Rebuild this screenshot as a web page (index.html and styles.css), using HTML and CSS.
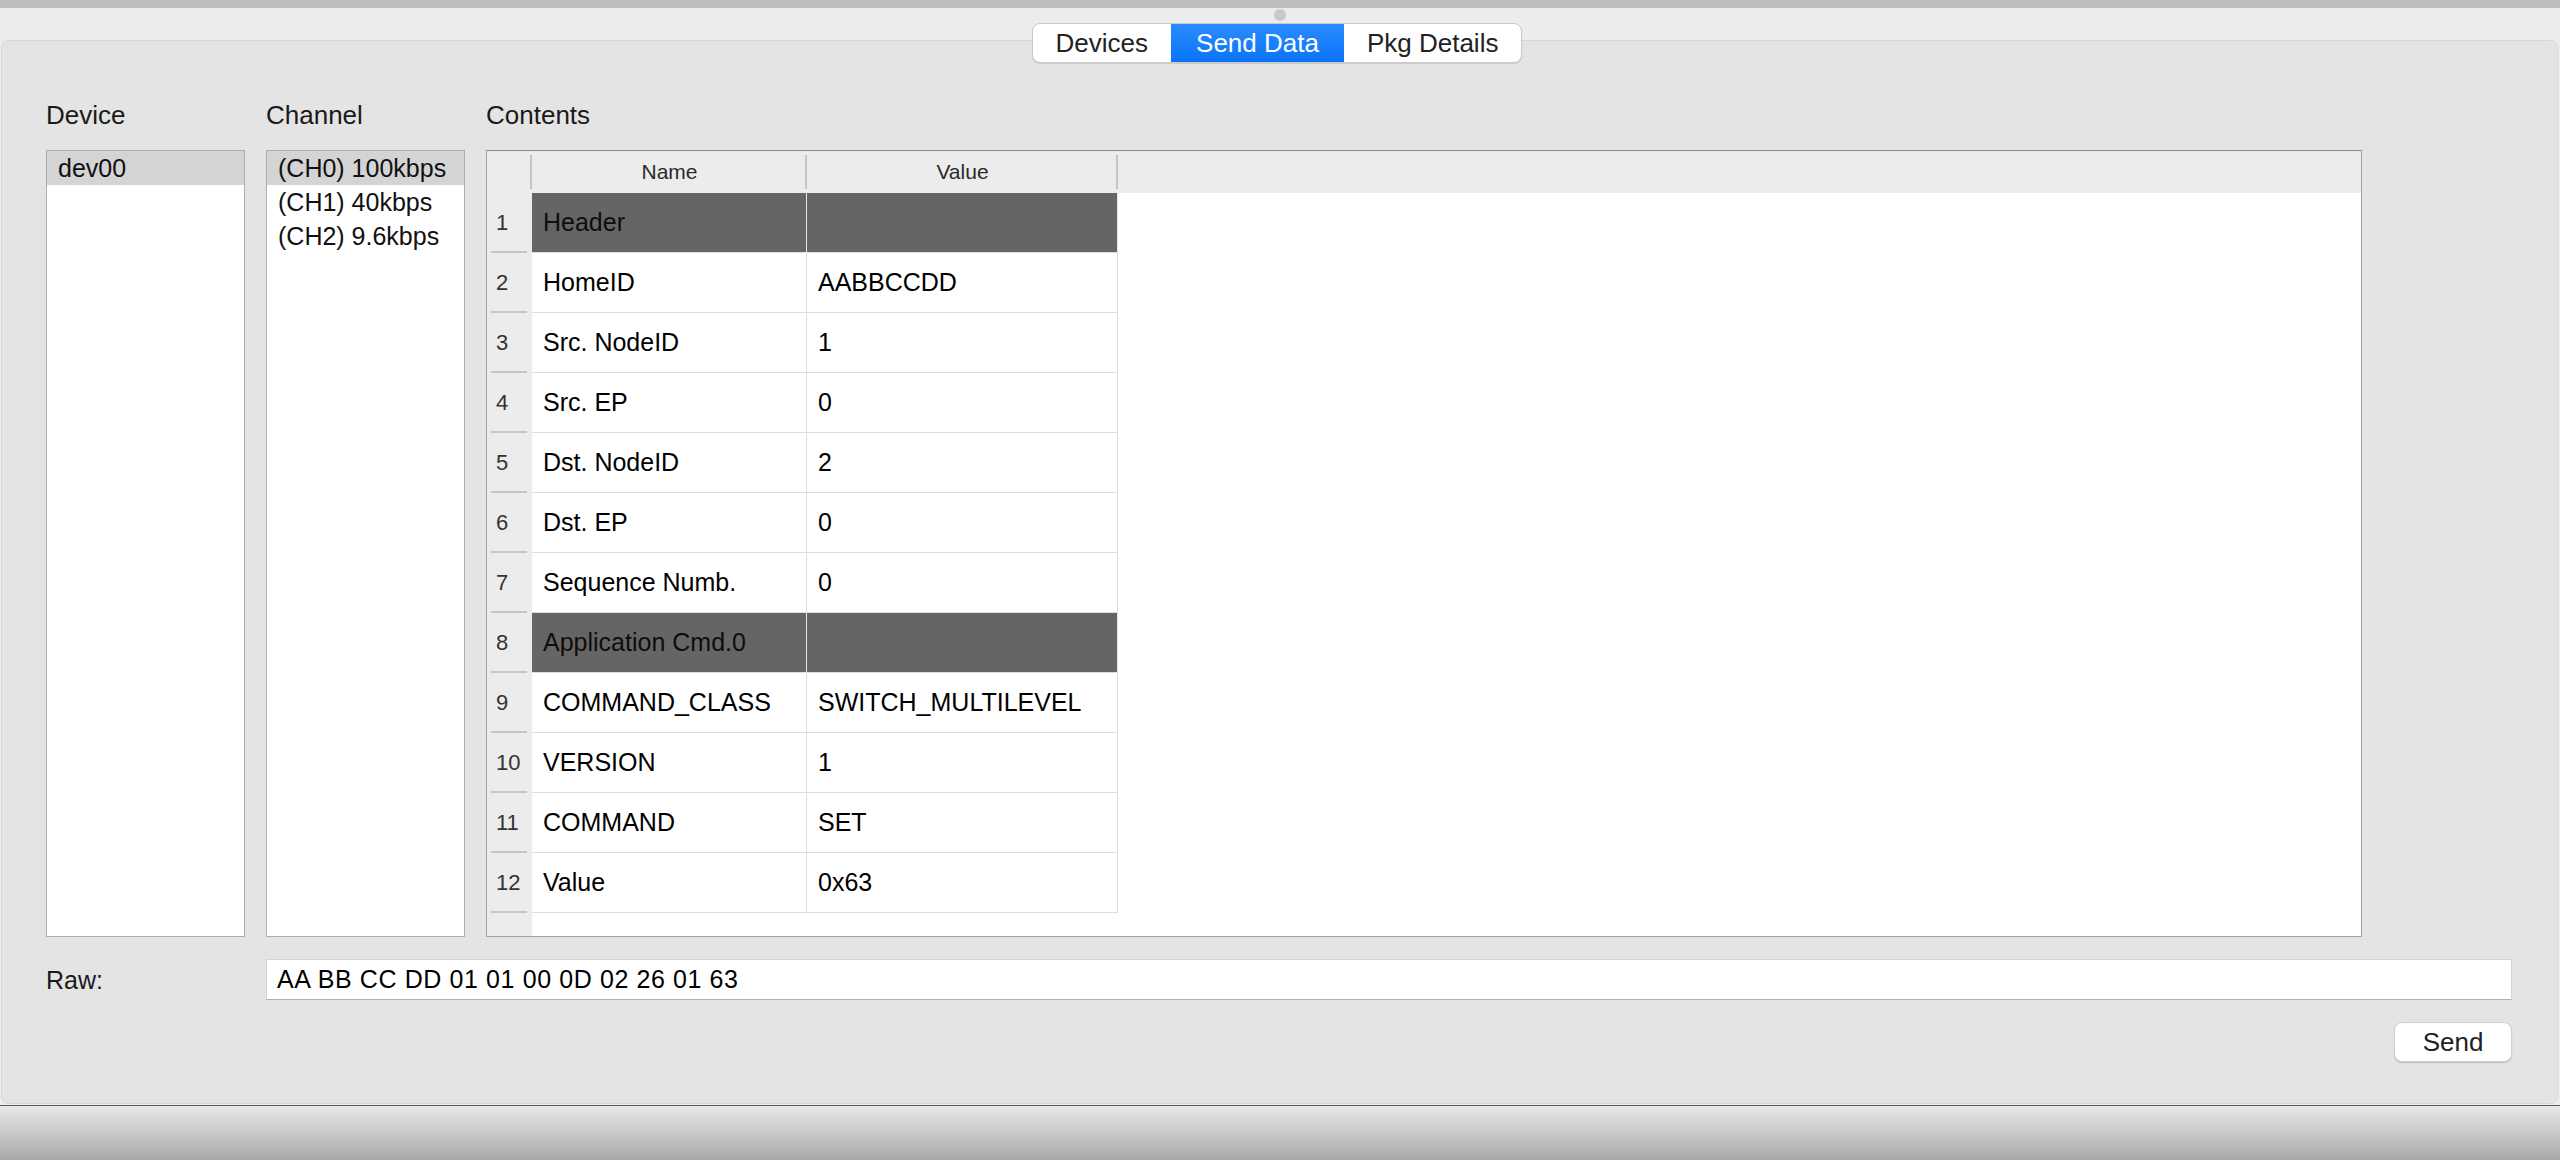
FILE: index.html
```html
<!DOCTYPE html>
<html>
<head>
<meta charset="utf-8">
<title>Send Data</title>
<link rel="stylesheet" href="styles.css">
</head>
<body>
<div class="topstrip"></div>
<div class="dotrow"><span class="dot"></span></div>
<div class="tabsrow">
  <div class="tabs">
    <div class="tab">Devices</div>
    <div class="tab active">Send Data</div>
    <div class="tab">Pkg Details</div>
  </div>
</div>
<div class="panel">
  <div class="cols">
    <div class="label">Device</div>
    <div class="label">Channel</div>
    <div class="label">Contents</div>
    <div class="list">
      <div class="item sel">dev00</div>
    </div>
    <div class="list">
      <div class="item sel">(CH0) 100kbps</div>
      <div class="item">(CH1) 40kbps</div>
      <div class="item">(CH2) 9.6kbps</div>
    </div>
    <div class="tbl">
      <div class="th rnh"></div>
      <div class="th">Name</div>
      <div class="th">Value</div>
      <div class="th fill"></div>

      <div class="rn">1</div><div class="cell dark">Header</div><div class="cell dark"></div><div class="fill"></div>
      <div class="rn">2</div><div class="cell">HomeID</div><div class="cell">AABBCCDD</div><div class="fill"></div>
      <div class="rn">3</div><div class="cell">Src. NodeID</div><div class="cell">1</div><div class="fill"></div>
      <div class="rn">4</div><div class="cell">Src. EP</div><div class="cell">0</div><div class="fill"></div>
      <div class="rn">5</div><div class="cell">Dst. NodeID</div><div class="cell">2</div><div class="fill"></div>
      <div class="rn">6</div><div class="cell">Dst. EP</div><div class="cell">0</div><div class="fill"></div>
      <div class="rn">7</div><div class="cell">Sequence Numb.</div><div class="cell">0</div><div class="fill"></div>
      <div class="rn">8</div><div class="cell dark">Application Cmd.0</div><div class="cell dark"></div><div class="fill"></div>
      <div class="rn">9</div><div class="cell">COMMAND_CLASS</div><div class="cell">SWITCH_MULTILEVEL</div><div class="fill"></div>
      <div class="rn">10</div><div class="cell">VERSION</div><div class="cell">1</div><div class="fill"></div>
      <div class="rn">11</div><div class="cell">COMMAND</div><div class="cell">SET</div><div class="fill"></div>
      <div class="rn">12</div><div class="cell">Value</div><div class="cell">0x63</div><div class="fill"></div>
    </div>
  </div>
  <div class="rawrow">
    <div class="rawlabel">Raw:</div>
    <div class="rawinput">AA BB CC DD 01 01 00 0D 02 26 01 63</div>
  </div>
  <div class="btnrow">
    <div class="btn">Send</div>
  </div>
</div>
<div class="bottombar"></div>
</body>
</html>
```

FILE: styles.css
```css
html, body {
  margin: 0;
  padding: 0;
}
body {
  width: 2560px;
  height: 1160px;
  overflow: hidden;
  background: #ececec;
  font-family: "Liberation Sans", Arial, Helvetica, sans-serif;
  color: #1a1a1a;
}
.topstrip {
  height: 8px;
  background: #bdbdbd;
}
.dotrow {
  height: 15px;
  display: flex;
  justify-content: center;
}
.dot {
  width: 12px;
  height: 12px;
  margin-top: 1px;
  border-radius: 50%;
  background: #c9c9c9;
}
.tabsrow {
  height: 40px;
  display: flex;
  justify-content: center;
  position: relative;
  z-index: 2;
}
.tabs {
  display: flex;
  margin-left: -6px;
  height: 40px;
  box-sizing: border-box;
  border: 1px solid #c9c9c9;
  border-radius: 8px;
  background: #fff;
  box-shadow: 0 1px 1px rgba(0,0,0,0.12);
  overflow: hidden;
}
.tab {
  padding: 0 23px;
  font-size: 26px;
  line-height: 38px;
  color: #222;
}
.tab.active {
  color: #fff;
  background: linear-gradient(#2a8cff, #0a74f7);
  padding: 0 25px;
}
.panel {
  margin: -23px 2px 0 1px;
  box-sizing: border-box;
  border: 1px solid #d7d7d7;
  border-radius: 8px;
  background: #e4e4e4;
  padding: 59px 45px 41px 44px;
  position: relative;
  z-index: 1;
}
.cols {
  display: grid;
  grid-template-columns: 199px 199px 1876px;
  grid-template-rows: 30px 787px;
  column-gap: 21px;
  row-gap: 20px;
}
.label {
  font-size: 26px;
  line-height: 30px;
  color: #1a1a1a;
}
.list {
  background: #fff;
  border: 1px solid #adadad;
  box-sizing: border-box;
}
.item {
  height: 34px;
  line-height: 34px;
  font-size: 25px;
  padding-left: 11px;
  color: #111;
  white-space: nowrap;
}
.item.sel {
  background: #d4d4d4;
}
.tbl {
  box-sizing: border-box;
  border: 1px solid #a2a2a2;
  border-top-color: #8a8a8a;
  background: linear-gradient(to right, #ececec 45px, #fff 45px);
  display: grid;
  grid-template-columns: 45px 275px 311px 1fr;
  grid-template-rows: 42px repeat(12, 60px);
  align-content: start;
}
.th {
  background: #ececec linear-gradient(#c4c4c4, #c4c4c4) no-repeat right 0 top 4px / 2px 34px;
  font-size: 21px;
  line-height: 42px;
  text-align: center;
  color: #2a2a2a;
}
.th.fill {
  background: #ececec;
}
.rn {
  box-sizing: border-box;
  background: #ececec linear-gradient(#c6c6c6, #c6c6c6) no-repeat left 4px bottom 0 / 36px 2px;
  font-size: 22px;
  line-height: 60px;
  padding-left: 9px;
  color: #333;
}
.cell {
  box-sizing: border-box;
  background: #fff;
  border-right: 1px solid #dedede;
  border-bottom: 1px solid #dedede;
  font-size: 25px;
  line-height: 59px;
  padding-left: 11px;
  color: #000;
  white-space: nowrap;
}
.cell.dark {
  background: #656565;
  border-right-color: #e6e6e6;
  color: #0d0d0d;
}
.fill {
  background: #fff;
}
.rawrow {
  display: grid;
  grid-template-columns: 220px 1fr;
  margin-top: 22px;
  height: 39px;
}
.rawlabel {
  font-size: 25px;
  line-height: 39px;
  padding-top: 2px;
  color: #1a1a1a;
}
.rawinput {
  box-sizing: border-box;
  background: #fff;
  border: 1px solid #d4d4d4;
  border-bottom-color: #b0b0b0;
  font-size: 25px;
  letter-spacing: 0.6px;
  line-height: 35px;
  padding: 2px 0 0 10px;
  color: #000;
}
.btnrow {
  display: flex;
  justify-content: flex-end;
  margin-top: 24px;
}
.btn {
  width: 118px;
  height: 40px;
  box-sizing: border-box;
  background: #fff;
  border: 1px solid #d0d0d0;
  border-radius: 8px;
  box-shadow: 0 1px 1px rgba(0,0,0,0.18);
  font-size: 26px;
  line-height: 38px;
  text-align: center;
  color: #222;
}
.bottombar {
  margin-top: 1px;
  height: 55px;
  box-sizing: border-box;
  border-top: 1px solid #5c5c5c;
  background: linear-gradient(#e8e8e8, #a9a9a9);
}
```
